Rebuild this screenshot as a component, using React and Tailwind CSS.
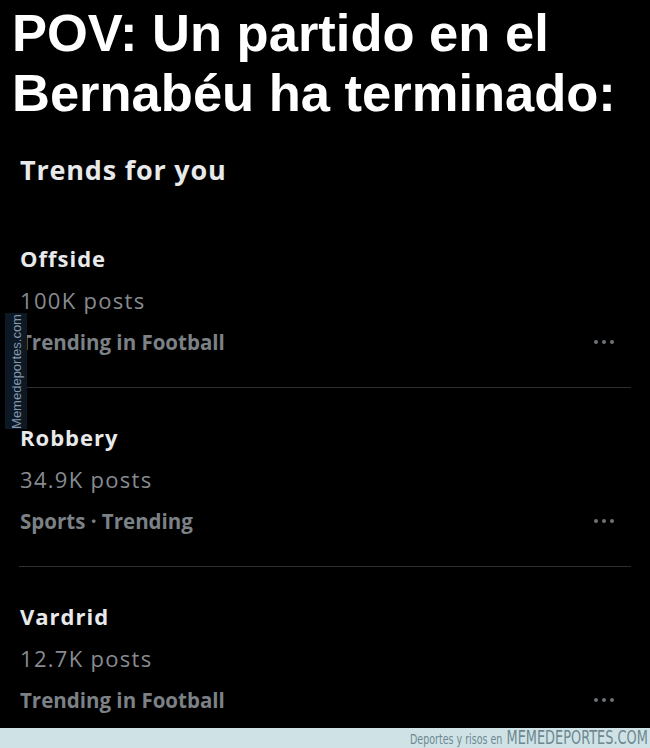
const trends = [
  { name: "Offside", posts: "100K posts", category: "Trending in Football" },
  { name: "Robbery", posts: "34.9K posts", category: "Sports · Trending" },
  { name: "Vardrid", posts: "12.7K posts", category: "Trending in Football" },
];

const Dots = () => (
  <div className="flex items-center gap-[4px] mr-[36px]">
    <span className="w-[4px] h-[4px] rounded-full bg-[#6e7377]" />
    <span className="w-[4px] h-[4px] rounded-full bg-[#6e7377]" />
    <span className="w-[4px] h-[4px] rounded-full bg-[#6e7377]" />
  </div>
);

const Trend = ({ trend, first, last }) => (
  <div>
    <div className={`pl-5 ${first ? "" : "pt-[28px]"} ${last ? "pb-[7px]" : "pb-[24px]"}`}>
      <p className="text-[22px] font-bold leading-[42px] tracking-[1px] text-[#e7e9ea]">{trend.name}</p>
      <p className="text-[22px] leading-[42px] tracking-[1.3px] text-[#878b90]">{trend.posts}</p>
      <div className="flex items-center justify-between">
        <p className="text-[20.5px] font-bold leading-[42px] text-[#7c8186]">{trend.category}</p>
        <Dots />
      </div>
    </div>
    {!last && <div className="mx-[19px] h-px bg-[#2b2e32]" />}
  </div>
);

export default function App() {
  return (
    <div className="relative w-[650px] h-[748px] bg-black overflow-hidden">
      {/* Meme caption */}
      <h1 className="pl-[12px] pt-[3px] text-[52.5px] font-bold leading-[60px] text-white font-['Liberation_Sans',Arial,sans-serif]">
        POV: Un partido en el
        <br />
        Bernabéu ha terminado:
      </h1>

      {/* Trends panel */}
      <div className="font-['Open_Sans','Noto_Sans',sans-serif]">
        <h2 className="mt-[29px] pl-5 text-[27px] font-bold leading-[36px] tracking-[0.8px] text-[#e7e9ea]">Trends for you</h2>
        <div className="mt-[49px]">
          {trends.map((t, i) => (
            <Trend key={t.name} trend={t} first={i === 0} last={i === trends.length - 1} />
          ))}
        </div>
      </div>

      {/* watermark on the side */}
      <div className="absolute left-[5px] top-[313px] w-[22px] h-[116px] bg-[#0c1824] flex items-center justify-center">
        <span className="block -rotate-90 whitespace-nowrap text-[13px] leading-none text-[#8597ad] font-['Liberation_Sans',Arial,sans-serif]">
          Memedeportes.com
        </span>
      </div>

      {/* footer bar */}
      <div className="absolute left-0 right-0 bottom-0 h-[20px] bg-[#cfe3e6] flex items-center justify-end">
        <div className="flex items-baseline origin-right scale-x-[0.68] whitespace-nowrap leading-[20px] text-[#6e8891] font-['DejaVu_Sans',sans-serif] mr-[2px]">
          <span className="text-[14px] mr-[6px]">Deportes y risos en</span>
          <span className="text-[19px]">MEMEDEPORTES.COM</span>
        </div>
      </div>
    </div>
  );
}
